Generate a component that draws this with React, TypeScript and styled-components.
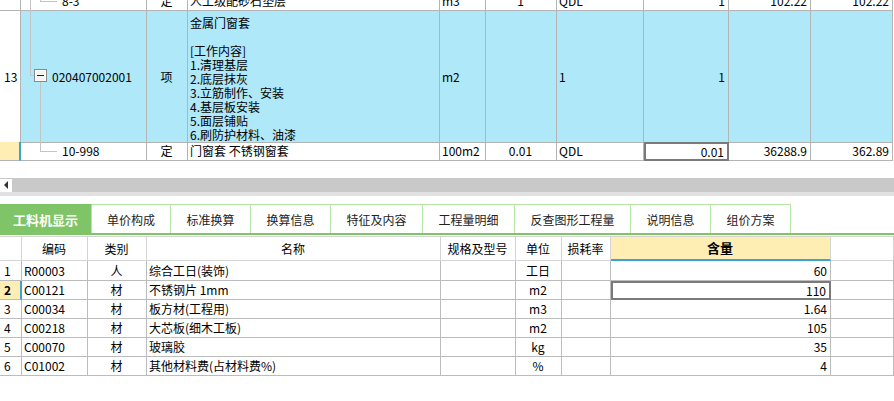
import React from 'react';
import styled, { createGlobalStyle } from 'styled-components';

const GlobalStyle = createGlobalStyle`
  html, body {
    margin: 0;
    padding: 0;
    background: #fff;
    overflow: hidden;
  }
  body {
    font-family: "Noto Sans CJK SC", "DejaVu Sans", sans-serif;
    font-size: 12px;
    color: #000;
  }
`;

const TOP_COLS = '21px 126px 41px 252px 46px 71px 87px 85px 82px 82px';
const BOTTOM_COLS = '22px 66px 59px 294px 75px 46px 49px 220px 63px';

const Page = styled.div`
  width: 894px;
  height: 401px;
  overflow: hidden;
  display: flex;
  flex-direction: column;
`;

const TopTable = styled.div`
  margin-top: -8px;
  display: flex;
  flex-direction: column;
`;

const Row = styled.div<{ $cols: string; $h: number; $bg?: string }>`
  display: grid;
  grid-template-columns: ${({ $cols }) => $cols};
  height: ${({ $h }) => $h}px;
  background: ${({ $bg }) => $bg || '#fff'};
`;

const Cell = styled.div<{ $align?: 'left' | 'center' | 'right'; $bg?: string; $line?: string }>`
  position: relative;
  display: flex;
  align-items: center;
  justify-content: ${({ $align }) =>
    $align === 'right' ? 'flex-end' : $align === 'center' ? 'center' : 'flex-start'};
  padding: 0 3px 0 2px;
  border-right: 1px solid ${({ $line }) => $line || '#b4b4b4'};
  border-bottom: 1px solid ${({ $line }) => $line || '#b4b4b4'};
  background: ${({ $bg }) => $bg || 'transparent'};
  white-space: nowrap;
  overflow: visible;
  line-height: 14px;
  box-sizing: border-box;
`;

const IndexCell = styled(Cell)<{ $active?: boolean }>`
  padding-left: 4px;
  background: ${({ $active }) => ($active ? '#ffeeb4' : '#fff')};
  ${({ $active }) => ($active ? 'border-right: 2px solid #3ba3d3;' : '')}
  font-weight: ${({ $active }) => ($active ? 700 : 400)};
`;

const SelectedCell = styled(Cell)`
  border: 2px solid #7a7a7a;
  background: #fff;
`;

const NameBlock = styled.div`
  align-self: flex-start;
  padding-top: 5px;
  display: flex;
  flex-direction: column;
  line-height: 14px;
`;

const CodeText = styled.span<{ $indent: number }>`
  padding-left: ${({ $indent }) => $indent}px;
`;

const TreeSvg = styled.svg`
  position: absolute;
  left: 0;
  top: 0;
  pointer-events: none;
`;

const Spacer = styled.div<{ $h: number; $bg?: string }>`
  height: ${({ $h }) => $h}px;
  background: ${({ $bg }) => $bg || '#fff'};
  flex-shrink: 0;
`;

const ScrollBar = styled.div`
  height: 14px;
  background: #c9c9c9;
  display: flex;
  align-items: center;
`;

const ScrollButton = styled.div`
  width: 12px;
  height: 13px;
  background: #fff;
  display: flex;
  align-items: center;
  justify-content: center;

  &::before {
    content: '';
    border-top: 4px solid transparent;
    border-bottom: 4px solid transparent;
    border-right: 4px solid #333;
  }
`;

const Tabs = styled.div`
  display: flex;
  height: 31px;
  border-bottom: 2px solid #80c468;
  box-sizing: border-box;
`;

const Tab = styled.div<{ $w: number; $active?: boolean }>`
  width: ${({ $w }) => $w}px;
  box-sizing: border-box;
  display: flex;
  align-items: center;
  justify-content: center;
  border-top: 1px solid ${({ $active }) => ($active ? '#80c468' : '#b6e4a2')};
  border-right: 1px solid #b6e4a2;
  background: ${({ $active }) => ($active ? '#80c468' : '#fff')};
  color: ${({ $active }) => ($active ? '#fff' : '#222')};
  font-size: ${({ $active }) => ($active ? 13 : 12)}px;
  font-weight: ${({ $active }) => ($active ? 700 : 400)};
  padding-top: 1px;
`;

const HeaderRow = styled(Row)`
  border-top: 1px solid #d4d4d4;
  margin-top: 1px;
`;

const HeadCell = styled(Cell)<{ $hl?: boolean }>`
  justify-content: center;
  font-size: 12px;
  border-right-color: #d4d4d4;
  border-bottom: ${({ $hl }) => ($hl ? '2px solid #3ba3d3' : '1px solid #d4d4d4')};
  background: ${({ $hl }) => ($hl ? '#ffeeb4' : '#fff')};
  font-weight: ${({ $hl }) => ($hl ? 700 : 400)};
  font-size: ${({ $hl }) => ($hl ? 13 : 12)}px;
`;

const MinusBox = () => (
  <g>
    <rect x="13.5" y="58.5" width="12" height="12" fill="#e8e8e8" stroke="#8a8a8a" />
    <rect x="14.5" y="59.5" width="10" height="10" fill="#f4f4f4" stroke="#fff" />
    <line x1="16" y1="64.5" x2="23" y2="64.5" stroke="#222" strokeWidth="1" />
  </g>
);

const tabs = [
  { label: '工料机显示', w: 92, active: true },
  { label: '单价构成', w: 79 },
  { label: '标准换算', w: 80 },
  { label: '换算信息', w: 80 },
  { label: '特征及内容', w: 92 },
  { label: '工程量明细', w: 92 },
  { label: '反查图形工程量', w: 116 },
  { label: '说明信息', w: 80 },
  { label: '组价方案', w: 80 },
];

const materials = [
  { code: 'R00003', type: '人', name: '综合工日(装饰)', unit: '工日', qty: '60' },
  { code: 'C00121', type: '材', name: '不锈钢片 1mm', unit: 'm2', qty: '110' },
  { code: 'C00034', type: '材', name: '板方材(工程用)', unit: 'm3', qty: '1.64' },
  { code: 'C00218', type: '材', name: '大芯板(细木工板)', unit: 'm2', qty: '105' },
  { code: 'C00070', type: '材', name: '玻璃胶', unit: 'kg', qty: '35' },
  { code: 'C01002', type: '材', name: '其他材料费(占材料费%)', unit: '%', qty: '4' },
];

const workLines = [
  '金属门窗套',
  '\u00a0',
  '[工作内容]',
  '1.清理基层',
  '2.底层抹灰',
  '3.立筋制作、安装',
  '4.基层板安装',
  '5.面层铺贴',
  '6.刷防护材料、油漆',
];

const BLUE = '#aee8f9';
const TREE = '#c4c4c4';

function App() {
  return (
    <Page>
      <GlobalStyle />
      <TopTable>
        <Row $cols={TOP_COLS} $h={19}>
          <IndexCell />
          <Cell>
            <TreeSvg width="126" height="19">
              <line x1="9.5" y1="0" x2="9.5" y2="19" stroke={TREE} />
              <line x1="19.5" y1="0" x2="19.5" y2="10" stroke={TREE} />
              <line x1="19.5" y1="9.5" x2="36" y2="9.5" stroke={TREE} />
            </TreeSvg>
            <CodeText $indent={39}>8-3</CodeText>
          </Cell>
          <Cell $align="center">定</Cell>
          <Cell>人工级配砂石垫层</Cell>
          <Cell>m3</Cell>
          <Cell $align="center">1</Cell>
          <Cell>QDL</Cell>
          <Cell $align="right">1</Cell>
          <Cell $align="right">102.22</Cell>
          <Cell $align="right">102.22</Cell>
        </Row>
        <Row $cols={TOP_COLS} $h={131}>
          <IndexCell>13</IndexCell>
          <Cell $bg={BLUE}>
            <TreeSvg width="126" height="131">
              <line x1="9.5" y1="0" x2="9.5" y2="65" stroke={TREE} />
              <line x1="9.5" y1="64.5" x2="13" y2="64.5" stroke={TREE} />
              <line x1="19.5" y1="71" x2="19.5" y2="131" stroke={TREE} />
              <MinusBox />
            </TreeSvg>
            <CodeText $indent={29}>020407002001</CodeText>
          </Cell>
          <Cell $bg={BLUE} $align="center">项</Cell>
          <Cell $bg={BLUE}>
            <NameBlock>
              {workLines.map((l, i) => (
                <span key={i}>{l}</span>
              ))}
            </NameBlock>
          </Cell>
          <Cell $bg={BLUE}>m2</Cell>
          <Cell $bg={BLUE} />
          <Cell $bg={BLUE}>1</Cell>
          <Cell $bg={BLUE} $align="right">1</Cell>
          <Cell $bg={BLUE} />
          <Cell $bg={BLUE} />
        </Row>
        <Row $cols={TOP_COLS} $h={19}>
          <IndexCell $active />
          <Cell>
            <TreeSvg width="126" height="19">
              <line x1="19.5" y1="0" x2="19.5" y2="10" stroke={TREE} />
              <line x1="19.5" y1="9.5" x2="36" y2="9.5" stroke={TREE} />
            </TreeSvg>
            <CodeText $indent={39}>10-998</CodeText>
          </Cell>
          <Cell $align="center">定</Cell>
          <Cell>门窗套 不锈钢窗套</Cell>
          <Cell>100m2</Cell>
          <Cell $align="center">0.01</Cell>
          <Cell>QDL</Cell>
          <SelectedCell $align="right">0.01</SelectedCell>
          <Cell $align="right">36288.9</Cell>
          <Cell $align="right">362.89</Cell>
        </Row>
      </TopTable>

      <Spacer $h={17} />
      <ScrollBar>
        <ScrollButton />
      </ScrollBar>
      <Spacer $h={4} $bg="#e1e1e1" />
      <Spacer $h={8} />

      <Tabs>
        {tabs.map((t) => (
          <Tab key={t.label} $w={t.w} $active={t.active}>
            {t.label}
          </Tab>
        ))}
      </Tabs>

      <HeaderRow $cols={BOTTOM_COLS} $h={24}>
        <HeadCell />
        <HeadCell>编码</HeadCell>
        <HeadCell>类别</HeadCell>
        <HeadCell>名称</HeadCell>
        <HeadCell>规格及型号</HeadCell>
        <HeadCell>单位</HeadCell>
        <HeadCell>损耗率</HeadCell>
        <HeadCell $hl>含量</HeadCell>
        <HeadCell />
      </HeaderRow>
      {materials.map((m, i) => (
        <Row key={m.code} $cols={BOTTOM_COLS} $h={i === 0 ? 20 : 19}>
          <IndexCell $active={i === 1} $line="#bcbcbc">
            {i + 1}
          </IndexCell>
          <Cell $line="#bcbcbc">{m.code}</Cell>
          <Cell $line="#bcbcbc" $align="center">
            {m.type}
          </Cell>
          <Cell $line="#bcbcbc">{m.name}</Cell>
          <Cell $line="#bcbcbc" />
          <Cell $line="#bcbcbc" $align="center">
            {m.unit}
          </Cell>
          <Cell $line="#bcbcbc" />
          {i === 1 ? (
            <SelectedCell $align="right">{m.qty}</SelectedCell>
          ) : (
            <Cell $line="#bcbcbc" $align="right">
              {m.qty}
            </Cell>
          )}
          <Cell $line="#bcbcbc" />
        </Row>
      ))}
    </Page>
  );
}

export default App;
